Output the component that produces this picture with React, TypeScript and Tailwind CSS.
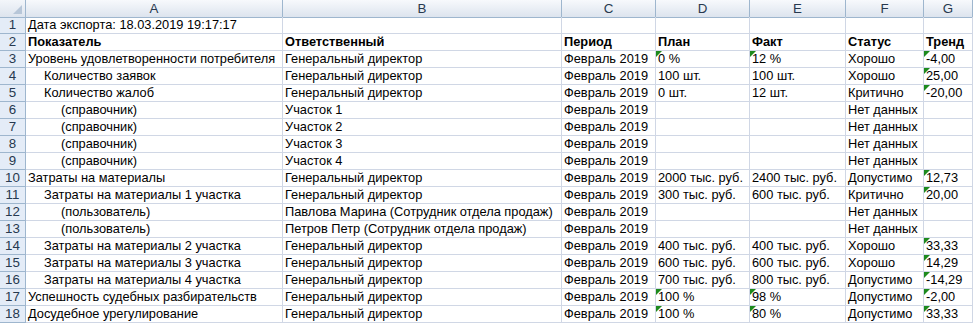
import React from 'react';

type Cell = { v: string; tri?: boolean };
type Row = { indent: number; bold?: boolean; cells: Cell[] };

const GD = 'Генеральный директор';
const FEB = 'Февраль 2019';

const c = (v: string, tri = false): Cell => ({ v, tri });

const rows: Row[] = [
  { indent: 0, cells: [c('Дата экспорта: 18.03.2019 19:17:17'), c(''), c(''), c(''), c(''), c(''), c('')] },
  {
    indent: 0,
    bold: true,
    cells: [c('Показатель'), c('Ответственный'), c('Период'), c('План'), c('Факт'), c('Статус'), c('Тренд')],
  },
  { indent: 0, cells: [c('Уровень удовлетворенности потребителя'), c(GD), c(FEB), c('0 %', true), c('12 %', true), c('Хорошо'), c('-4,00', true)] },
  { indent: 1, cells: [c('Количество заявок'), c(GD), c(FEB), c('100 шт.'), c('100 шт.'), c('Хорошо'), c('25,00', true)] },
  { indent: 1, cells: [c('Количество жалоб'), c(GD), c(FEB), c('0 шт.'), c('12 шт.'), c('Критично'), c('-20,00', true)] },
  { indent: 2, cells: [c('(справочник)'), c('Участок 1'), c(FEB), c(''), c(''), c('Нет данных'), c('')] },
  { indent: 2, cells: [c('(справочник)'), c('Участок 2'), c(FEB), c(''), c(''), c('Нет данных'), c('')] },
  { indent: 2, cells: [c('(справочник)'), c('Участок 3'), c(FEB), c(''), c(''), c('Нет данных'), c('')] },
  { indent: 2, cells: [c('(справочник)'), c('Участок 4'), c(FEB), c(''), c(''), c('Нет данных'), c('')] },
  { indent: 0, cells: [c('Затраты на материалы'), c(GD), c(FEB), c('2000 тыс. руб.'), c('2400 тыс. руб.'), c('Допустимо'), c('12,73', true)] },
  { indent: 1, cells: [c('Затраты на материалы 1 участка'), c(GD), c(FEB), c('300 тыс. руб.'), c('600 тыс. руб.'), c('Критично'), c('20,00', true)] },
  { indent: 2, cells: [c('(пользователь)'), c('Павлова Марина (Сотрудник отдела продаж)'), c(FEB), c(''), c(''), c('Нет данных'), c('')] },
  { indent: 2, cells: [c('(пользователь)'), c('Петров Петр (Сотрудник отдела продаж)'), c(FEB), c(''), c(''), c('Нет данных'), c('')] },
  { indent: 1, cells: [c('Затраты на материалы 2 участка'), c(GD), c(FEB), c('400 тыс. руб.'), c('400 тыс. руб.'), c('Хорошо'), c('33,33', true)] },
  { indent: 1, cells: [c('Затраты на материалы 3 участка'), c(GD), c(FEB), c('600 тыс. руб.'), c('600 тыс. руб.'), c('Хорошо'), c('14,29', true)] },
  { indent: 1, cells: [c('Затраты на материалы 4 участка'), c(GD), c(FEB), c('700 тыс. руб.'), c('800 тыс. руб.'), c('Допустимо'), c('-14,29', true)] },
  { indent: 0, cells: [c('Успешность судебных разбирательств'), c(GD), c(FEB), c('100 %', true), c('98 %', true), c('Допустимо'), c('-2,00', true)] },
  { indent: 0, cells: [c('Досудебное урегулирование'), c(GD), c(FEB), c('100 %', true), c('80 %', true), c('Допустимо'), c('33,33', true)] },
];

const letters = ['A', 'B', 'C', 'D', 'E', 'F', 'G'];
const indentCls = ['pl-[2px]', 'pl-[18px]', 'pl-[35px]'];

export default function App() {
  return (
    <div
      className="w-[973px] h-[324px] overflow-hidden bg-white text-black text-[12.8px] leading-none"
      style={{ fontFamily: '"Liberation Sans", Arial, sans-serif' }}
    >
      <div className="grid grid-cols-[26px_257px_279px_94px_94px_96px_78px_1fr] auto-rows-[17px]">
        {/* Header row */}
        <div className="relative h-[18px] bg-gradient-to-b from-[#f3f6fa] to-[#dde4ee] border-r border-b border-[#9eb6ce]">
          <div className="absolute right-[3px] bottom-[3px] w-0 h-0 border-l-[9px] border-l-transparent border-b-[9px] border-b-[#b7c6d8]" />
        </div>
        {letters.map((l) => (
          <div
            key={l}
            className="h-[18px] flex items-center justify-center bg-gradient-to-b from-[#f7f9fc] to-[#dde4ee] border-r border-b border-[#9eb6ce] text-[#27394f] text-[13.33px]"
          >
            {l}
          </div>
        ))}

        {rows.map((row, i) => (
          <React.Fragment key={i}>
            <div className="flex items-center justify-center bg-[#e4ecf7] border-r border-b border-[#9eb6ce] text-[#27394f] text-[13.33px]">
              {i + 1}
            </div>
            {row.cells.map((cell, j) => (
              <div
                key={j}
                className={`relative flex items-center whitespace-nowrap overflow-hidden border-r border-b border-[#d0d7e5] ${
                  j === 0 ? indentCls[row.indent] : 'pl-[2px]'
                } ${row.bold ? 'font-bold' : ''}`}
              >
                {cell.tri && (
                  <span className="absolute left-0 top-0 w-0 h-0 border-t-[6px] border-t-[#1d8a1d] border-r-[6px] border-r-transparent" />
                )}
                <span className="pt-[1px]">{cell.v}</span>
              </div>
            ))}
          </React.Fragment>
        ))}
      </div>
    </div>
  );
}
